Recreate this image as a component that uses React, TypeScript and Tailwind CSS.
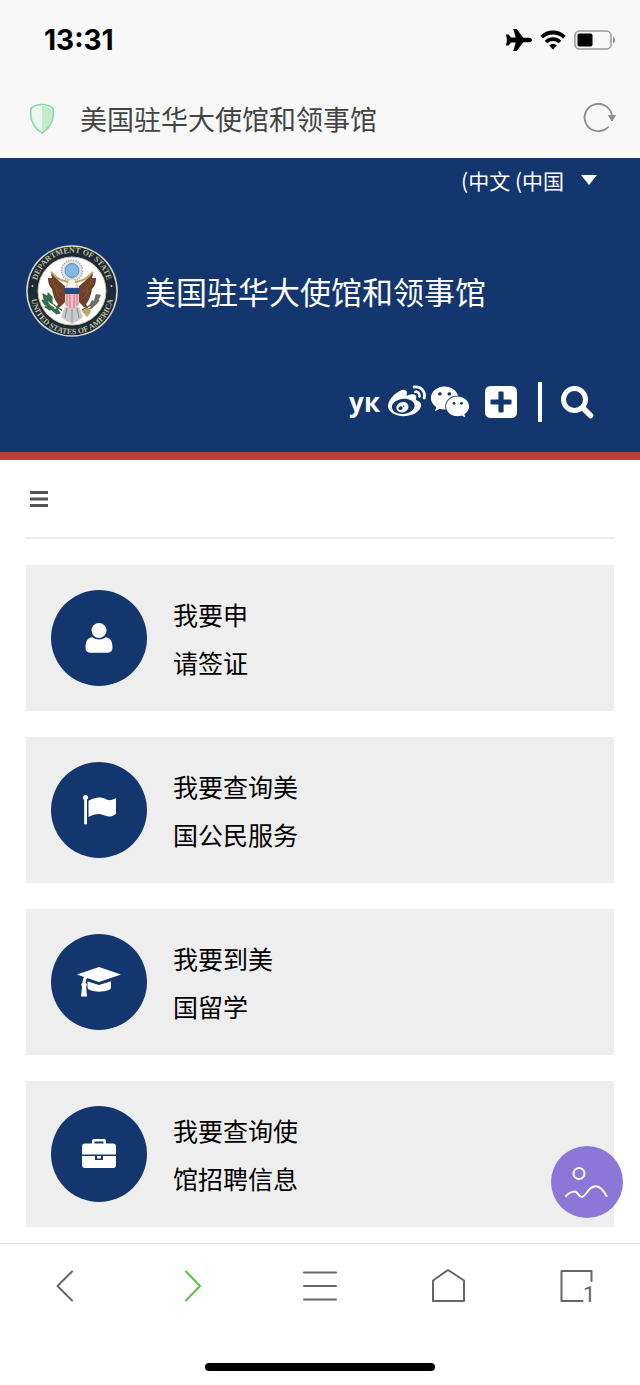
import { FaWeibo, FaWeixin } from "react-icons/fa";
import type { ReactNode } from "react";

const SITE_NAME = "美国驻华大使馆和领事馆";

function StatusBar() {
  return (
    <div className="flex h-20 items-center justify-between pr-6 pl-11">
      <time className="font-['Inter',sans-serif] text-[28px] leading-8 font-bold text-black">13:31</time>
      <div className="flex items-center gap-2">
        <svg viewBox="0 0 26 22" className="h-[22px] w-[26px]" role="img" aria-label="飞行模式">
          <path d="M26 11c0-1.400-1.700-2.300-3.500-2.300h-5.300L10.800 0H7.300l2.500 8.600H5L2.600 5.500H0L1 11 0 16.500h2.600L5 13.400h4.800L7.300 22h3.500l6.400-8.700h5.300c1.800 0 3.500-.9 3.500-2.300z" fill="#000" />
        </svg>
        <svg viewBox="0 0 26 20" className="h-5 w-[26px]" fill="none" stroke="#000" strokeWidth="3.800" role="img" aria-label="无线网络">
          <path d="M1.600 7.200a16.200 16.200 0 0 1 22.800 0" />
          <path d="M6 12a10 10 0 0 1 14 0" />
          <path d="M9.200 15.400a5.400 5.400 0 0 1 7.600 0L13 19.500z" fill="#000" stroke="none" />
        </svg>
        <svg viewBox="0 0 42 20" className="h-5 w-[42px]" role="img" aria-label="电池">
          <rect x="1" y="1" width="36" height="18" rx="4.500" fill="none" stroke="#999" strokeWidth="1.500" />
          <rect x="3.500" y="3.500" width="15" height="13" rx="2" fill="#000" />
          <path d="M39 6.500c3 1.500 3 5.500 0 7z" fill="#999" />
        </svg>
      </div>
    </div>
  );
}

function AddressBar() {
  return (
    <div className="flex h-[78px] items-center gap-6 pr-6 pl-7">
      <svg viewBox="0 0 28 32" className="h-8 w-7 shrink-0" role="img" aria-label="安全">
        <path d="M14 3v26C8 25 3.500 18 3.500 12V7.500C6.500 5 10.500 3 14 3z" fill="#e9f6eb" />
        <path d="M14 3v26c6-4 10.500-11 10.500-17V7.500C21.500 5 17.500 3 14 3z" fill="#c3ebc9" />
        <path d="M14 1.500c4 0 8 1.200 10.300 3.400.8.700 1 1.300 1 2.300v4.800c0 7-5 14.500-11.300 18C7.700 26.500 2.700 19 2.700 12V7.200c0-1 .2-1.600 1-2.300C6 2.700 10 1.500 14 1.500z" fill="none" stroke="#8bd99b" strokeWidth="1.700" />
      </svg>
      <input
        aria-label="地址栏"
        defaultValue={SITE_NAME}
        className="min-w-0 flex-1 bg-transparent text-[27px] leading-10 text-[#444] outline-none"
      />
      <button type="button" aria-label="重新加载" className="shrink-0">
        <svg viewBox="0 0 34 32" className="block h-8 w-[34px]">
          <path d="M26 24.200A13.700 13.700 0 1 1 30 14.500" fill="none" stroke="#8c8c8c" strokeWidth="1.800" strokeLinecap="round" />
          <path d="M26.500 12.500h7L30 18z" fill="#8c8c8c" stroke="#8c8c8c" strokeLinejoin="round" />
        </svg>
      </button>
    </div>
  );
}

function Seal() {
  return (
    <svg viewBox="0 0 92 92" className="size-[92px] shrink-0" role="img" aria-label="Department of State, United States of America">
      <defs>
        <path id="seal-top" d="M11.200 52A35.800 35.800 0 1 1 80.800 52" />
        <path id="seal-bottom" d="M5 43A41.300 41.300 0 1 0 87 43" />
      </defs>
      <circle cx="46" cy="46" r="45.800" fill="#d9dbc0" />
      <circle cx="46" cy="46" r="44.300" fill="#1c2a3c" />
      <circle cx="46" cy="46" r="34" fill="#fff" stroke="#c9c69a" strokeWidth="1" />
      <g fill="#c5c292" fontFamily="Liberation Serif, serif" fontSize="8" fontWeight="700" textAnchor="middle">
        <text><textPath href="#seal-top" startOffset="50%">DEPARTMENT OF STATE</textPath></text>
        <text><textPath href="#seal-bottom" startOffset="50%">UNITED STATES OF AMERICA</textPath></text>
      </g>
      <circle cx="6.500" cy="41" r="1" fill="#d9d6a8" />
      <circle cx="85.500" cy="41" r="1" fill="#d9d6a8" />
      <circle cx="46" cy="25.500" r="10.500" fill="#dfe3e4" stroke="#aeb3ae" strokeWidth="1.500" strokeDasharray="1.500 1" />
      <circle cx="46" cy="25.500" r="7" fill="#84b7e6" stroke="#5d8fc0" />
      <path d="M39 41C35 38 32 35 28 31l-1-3-2 1 1 4-4 0c0 5 1 8 4 11 1 6 3 12 6 15l-3 6 5-3 6-6z" fill="#70412a" />
      <path d="M53 41c4-3 7-6 11-10l1-3 2 1-1 4 4 0c0 5-1 8-4 11-1 6-3 12-6 15l3 6-5-3-6-6z" fill="#70412a" />
      <path d="M26 34c2 7 5 11 10 13M30 45c1 5 4 8 7 9M66 34c-2 7-5 11-10 13M62 45c-1 5-4 8-7 9" fill="none" stroke="#8a5638" strokeWidth="1" />
      <path d="M25 27c5 5 9 9 14 9l7 3 7-3c5 0 9-4 14-9" fill="none" stroke="#c1a15d" strokeWidth="2" />
      <path d="M42 36c0-3 8-3 8 0l2 7H40z" fill="#f5f2eb" stroke="#a69874" strokeWidth=".6" />
      <path d="M49 36l4 1-4 1z" fill="#d9a441" />
      <path d="M39 62l-4 10 5 4 6 3 6-3 5-4-4-10z" fill="#c9c9cc" />
      <path d="M41 63l-2 10M46 63v14M51 63l2 10" stroke="#88898f" strokeWidth="1" />
      <path d="M39 43h14v16c0 2-3 4-7 5-4-1-7-3-7-5z" fill="#efc3cd" />
      <path d="M41 49v12M44 49v14M48 49v14M51 49v12" stroke="#cf7f8f" strokeWidth="1.300" />
      <path d="M39 43h14v6H39z" fill="#28467f" />
      <path d="M36 65c-4-1-6-4-9-6-5-3-8-6-10-10" fill="none" stroke="#3f6a43" strokeWidth="1.300" />
      <path d="M17 49l1 5 4 2-1-5zM16 55l3 5 5 1-3-5zM19 62l5 3 4-2-5-3zM22 48l0 6 4 4 0-6zM26 65l5 4 3-1-3-4z" fill="#356c48" stroke="#356c48" strokeWidth="1.200" strokeLinejoin="round" />
      <path d="M56 65c7-3 13-8 18-15M57 67c8-3 12-6 16-12" fill="none" stroke="#6c6259" strokeWidth="1.400" />
      <path d="M70 49l5 1-3 6-5 2zM66 55l5 2-5 5-3-1z" fill="#716b68" />
      <path d="M55 65l8-2 2 4-4 5z" fill="#c3a362" />
    </svg>
  );
}

function SiteHeader() {
  return (
    <header className="border-b-8 border-[#bd3e38] bg-[#14366f] pb-[30px] text-white">
      <div className="flex h-11 items-center justify-end pr-[42px]">
        <label className="flex items-center gap-4">
          <span className="sr-only">语言</span>
          <select className="field-sizing-content h-10 appearance-none bg-transparent text-[21px] leading-10 text-white outline-none">
            <option>(中文 (中国</option>
          </select>
          <svg viewBox="0 0 18 10" className="h-[10px] w-[18px]" aria-hidden="true">
            <path d="M1 0h16L9 10z" fill="currentColor" />
          </svg>
        </label>
      </div>
      <a href="#home" className="mt-[43px] flex items-center gap-[27px] px-[26px]">
        <Seal />
        <h1 className="text-[31px] leading-10">{SITE_NAME}</h1>
      </a>
      <div className="mt-[45px] flex h-10 items-center justify-end pr-[46px]">
        <a href="#yk" className="mr-2 font-['Open_Sans',sans-serif] text-[26px] leading-8 font-bold">ук</a>
        <a href="#weibo" aria-label="微博" className="mr-1"><FaWeibo className="size-[38px]" /></a>
        <a href="#wechat" aria-label="微信" className="mr-[15px]"><FaWeixin className="size-10" /></a>
        <button type="button" aria-label="更多" className="mr-[21px]">
          <svg viewBox="0 0 32 32" className="block size-8">
            <path fillRule="evenodd" fill="currentColor" d="M5.500 0h21A5.500 5.500 0 0 1 32 5.500v21a5.500 5.500 0 0 1-5.500 5.500h-21A5.500 5.500 0 0 1 0 26.500v-21A5.500 5.500 0 0 1 5.500 0zm8.900 5.500a1 1 0 0 0-1 1v6.900H6.500a1 1 0 0 0-1 1v3.200a1 1 0 0 0 1 1h6.900v6.900a1 1 0 0 0 1 1h3.200a1 1 0 0 0 1-1v-6.900h6.900a1 1 0 0 0 1-1v-3.200a1 1 0 0 0-1-1h-6.900V6.500a1 1 0 0 0-1-1z" />
          </svg>
        </button>
        <span className="mr-[18px] h-10 w-1 bg-white" />
        <button type="button" aria-label="搜索">
          <svg viewBox="0 0 34 34" className="block size-[34px]" fill="none" stroke="currentColor">
            <circle cx="14.500" cy="14.500" r="11" strokeWidth="5" />
            <path d="M23 23l7.500 7.500" strokeWidth="5.500" strokeLinecap="round" />
          </svg>
        </button>
      </div>
    </header>
  );
}

const userIcon = (
  <>
    <circle cx="22" cy="14.500" r="7.500" />
    <path d="M15.500 21.300c3.500 3 9.500 3 13 0 5 .2 7 4.700 7 10.200 0 3.300-1.700 5.200-4.500 5.200H13c-2.800 0-4.500-1.900-4.500-5.200 0-5.500 2-10 7-10.200z" />
  </>
);
const flagIcon = (
  <>
    <circle cx="8.500" cy="9.500" r="2.500" />
    <path d="M7.200 11h2.800v25.300H7.200z" />
    <path d="M11.500 12.800c8-4 12-4 18-1.300 4 1.800 6 .3 9.500-1.500V26c-4.500 2.800-7 3.300-11 1.500-6-2.700-10-1.800-16.500 1.500z" />
  </>
);
const studyIcon = (
  <>
    <path d="M22 7L44 14.500 22 22 10 17.900c-.9 1.500-1.300 3.200-1.400 4.900 1.500.9 1.700 2.700.5 3.900L10 36.500H4l1.100-9.800c-1.200-1.200-1-3.100.4-3.900.1-2.200.5-4.100 1.500-5.900L0 14.500z" />
    <path d="M10.500 21.500L22 25l12-3.700v6.200c0 5.500-23.500 5.500-23.500 0z" />
  </>
);
const workIcon = (
  <>
    <path fillRule="evenodd" d="M15 11.500V9a2 2 0 0 1 2-2h10a2 2 0 0 1 2 2v2.500h7a3 3 0 0 1 3 3v8H5v-8a3 3 0 0 1 3-3zm2.500 0h9v-2h-9z" />
    <path d="M5 24h13v4h8v-4h13v9a3 3 0 0 1-3 3H8a3 3 0 0 1-3-3z" />
    <path d="M20 24h4v2.500h-4z" />
  </>
);

const services: { id: string; lines: [string, string]; icon: ReactNode }[] = [
  { id: "visa", lines: ["我要申", "请签证"], icon: userIcon },
  { id: "citizen", lines: ["我要查询美", "国公民服务"], icon: flagIcon },
  { id: "study", lines: ["我要到美", "国留学"], icon: studyIcon },
  { id: "jobs", lines: ["我要查询使", "馆招聘信息"], icon: workIcon },
];

function ServiceCard({ id, lines, icon }: (typeof services)[number]) {
  return (
    <a href={`#${id}`} className="flex items-center gap-[26px] bg-[#eee] p-[25px] text-[25px] leading-[48px] text-black">
      <span className="flex size-24 shrink-0 items-center justify-center rounded-full bg-[#14366f]">
        <svg viewBox="0 0 44 44" className="size-11 fill-white" aria-hidden="true">{icon}</svg>
      </span>
      <span>
        {lines[0]}
        <br />
        {lines[1]}
      </span>
    </a>
  );
}

function NavButton({ label, children, accent = false }: { label: string; children: ReactNode; accent?: boolean }) {
  return (
    <button type="button" aria-label={label} className={accent ? "flex justify-center text-[#5cbf45]" : "flex justify-center text-[#666]"}>
      <svg viewBox="0 0 40 40" className="size-10" fill="none" stroke="currentColor" strokeWidth="2" strokeLinecap="round" strokeLinejoin="round">
        {children}
      </svg>
    </button>
  );
}

function BrowserNav() {
  return (
    <nav className="border-t border-[#ddd] bg-white pt-[22px] pb-[13px]">
      <div className="grid grid-cols-5">
        <NavButton label="后退"><path d="M28 5.500L13.500 20 28 34.500" /></NavButton>
        <NavButton label="前进" accent><path d="M14 5.500L28 20 14 34.500" /></NavButton>
        <NavButton label="菜单"><path d="M4 6.500h32M4 20h32M4 33.500h32" /></NavButton>
        <NavButton label="主页"><path d="M5 14.500L20 4l16 10.500V35H5z" /></NavButton>
        <NavButton label="标签页">
          <path d="M35.500 15V5h-30v30h21" />
          <text x="27" y="36" fontSize="22" fontFamily="Roboto, sans-serif" fill="currentColor" stroke="none">1</text>
        </NavButton>
      </div>
      <div className="mx-auto mt-[57px] h-2 w-[36%] rounded-full bg-black" />
    </nav>
  );
}

export default function App() {
  return (
    <div className="min-h-screen bg-white font-['Noto_Sans_CJK_SC',sans-serif]">
      <div className="bg-[#f8f8f8]">
        <StatusBar />
        <AddressBar />
      </div>
      <SiteHeader />
      <main className="relative px-[26px] pb-4">
        <div className="flex h-[79px] items-center border-b-2 border-[#ebebeb]">
          <button type="button" aria-label="网站导航" className="ml-[3px]">
            <svg viewBox="0 0 20 18" className="block h-[18px] w-5" aria-hidden="true">
              <path d="M1 2.500h18M1 9h18M1 15.500h18" stroke="#555" strokeWidth="3" />
            </svg>
          </button>
        </div>
        <div className="mt-[26px] flex flex-col gap-[26px]">
          {services.map((service) => (
            <ServiceCard key={service.id} {...service} />
          ))}
        </div>
        <button type="button" aria-label="图片" className="absolute right-[17px] bottom-[25px] flex size-[72px] items-center justify-center rounded-full bg-[#8c77d8]">
          <svg viewBox="0 0 44 44" className="size-11" fill="none" stroke="#fff" strokeWidth="2" strokeLinecap="round">
            <circle cx="14" cy="13.500" r="5.500" />
            <path d="M1 36c6-6 10-5 12-2 2.500 4 5 4 8.500-1 6-9 13-10 20 3" />
          </svg>
        </button>
      </main>
      <BrowserNav />
    </div>
  );
}
